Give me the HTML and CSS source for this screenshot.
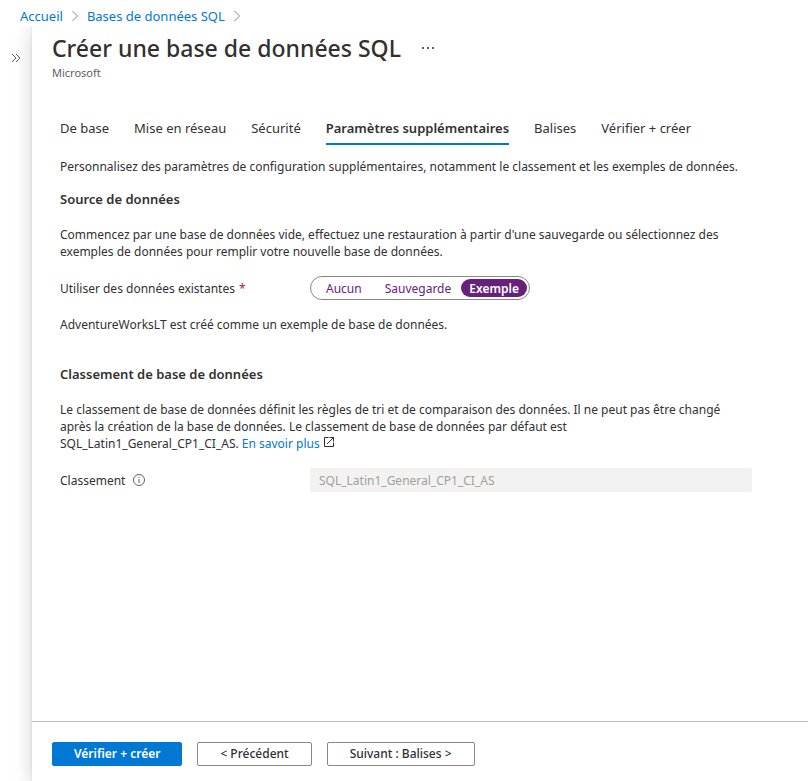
FILE: index.html
```html
<!DOCTYPE html>
<html lang="fr">
<head>
<meta charset="utf-8">
<meta name="viewport" content="width=device-width, initial-scale=1">
<title>Créer une base de données SQL</title>
<link rel="stylesheet" href="styles.css">
</head>
<body>
<nav class="breadcrumb">
  <a href="#">Accueil</a>
  <svg class="chevron" viewBox="0 0 8 12"><path d="M1.5 1 6.5 6l-5 5"/></svg>
  <a href="#">Bases de données SQL</a>
  <svg class="chevron" viewBox="0 0 8 12"><path d="M1.5 1 6.5 6l-5 5"/></svg>
</nav>
<div class="shell">
  <aside class="rail">
    <button class="expand" type="button">
      <svg viewBox="0 0 10 10"><path d="M1 1l4 4-4 4M5 1l4 4-4 4"/></svg>
    </button>
  </aside>
  <main class="blade">
    <header class="head">
      <div class="title-row">
        <h1>Créer une base de données SQL</h1>
        <button class="more" type="button">
          <svg viewBox="0 0 12 2"><path d="M0 0h2v2H0zM5 0h2v2H5zM10 0h2v2h-2z"/></svg>
        </button>
      </div>
      <p class="publisher">Microsoft</p>
    </header>
    <nav class="tabs">
      <a href="#">De base</a>
      <a href="#">Mise en réseau</a>
      <a href="#">Sécurité</a>
      <a href="#" class="active">Paramètres supplémentaires</a>
      <a href="#">Balises</a>
      <a href="#">Vérifier + créer</a>
    </nav>
    <form class="content">
      <p class="intro">Personnalisez des paramètres de configuration supplémentaires, notamment le classement et les exemples de données.</p>
      <section>
        <h2>Source de données</h2>
        <p class="text">Commencez par une base de données vide, effectuez une restauration à partir d'une sauvegarde ou sélectionnez des<br>exemples de données pour remplir votre nouvelle base de données.</p>
        <div class="field">
          <span class="label" id="source-label">Utiliser des données existantes <span class="required">*</span></span>
          <div class="pills" role="radiogroup" aria-labelledby="source-label">
            <label><input type="radio" name="source"><span>Aucun</span></label>
            <label><input type="radio" name="source"><span>Sauvegarde</span></label>
            <label><input type="radio" name="source" checked><span>Exemple</span></label>
          </div>
        </div>
        <p class="text">AdventureWorksLT est créé comme un exemple de base de données.</p>
      </section>
      <section class="collation">
        <h2>Classement de base de données</h2>
        <p class="text">Le classement de base de données définit les règles de tri et de comparaison des données. Il ne peut pas être changé<br>après la création de la base de données. Le classement de base de données par défaut est<br>SQL_Latin1_General_CP1_CI_AS. <a href="#">En savoir plus <svg class="external" viewBox="0 0 12 12"><path d="M5.500 1.500h-4v9h9v-4M6.500 1.500h4v4M10.500 1.500 4 8"/></svg></a></p>
        <div class="field">
          <label class="label" for="collation">Classement
            <svg class="info" viewBox="0 0 12 12"><circle cx="6" cy="6" r="5.500"/><path d="M6 5v4M6 3v1"/></svg>
          </label>
          <input class="textbox" id="collation" type="text" value="SQL_Latin1_General_CP1_CI_AS" disabled>
        </div>
      </section>
    </form>
    <footer class="actions">
      <button class="btn primary" type="button">Vérifier + créer</button>
      <button class="btn previous" type="button">&lt; Précédent</button>
      <button class="btn next" type="button">Suivant : Balises &gt;</button>
    </footer>
  </main>
</div>
</body>
</html>
```
FILE: styles.css
```css
* {
  box-sizing: border-box;
}

body {
  margin: 0;
  min-height: 100vh;
  display: flex;
  flex-direction: column;
  background: #fff;
  color: #323130;
  font-family: "Noto Sans", "Open Sans", sans-serif;
  font-size: 12px;
  line-height: 17px;
}

h1, h2, p {
  margin: 0;
}

a {
  color: #0078d4;
  text-decoration: none;
}

button, input {
  font: inherit;
}

svg {
  fill: none;
  stroke: #605e5c;
}

.breadcrumb {
  display: flex;
  align-items: center;
  gap: 8px;
  height: 26px;
  padding: 6px 20px 0;
  font-size: 13px;
}

.chevron {
  width: 8px;
  height: 12px;
  stroke: #8a8886;
}

.shell {
  flex: 1;
  display: flex;
}

.rail {
  flex: 0 0 32px;
  padding-top: 24px;
}

.expand, .more {
  display: block;
  padding: 0;
  border: 0;
  background: none;
}

.expand {
  margin: 3px auto 0;
}

.expand svg {
  display: block;
  width: 10px;
  height: 10px;
}

.blade {
  flex: 1;
  min-width: 0;
  display: flex;
  flex-direction: column;
  background: #fff;
  box-shadow: 0 4px 18px rgba(0, 0, 0, 0.18), 0 0 2px rgba(0, 0, 0, 0.12);
  clip-path: inset(0 0 0 -20px);
}

.head {
  padding: 6px 20px 0;
}

.title-row {
  display: flex;
  align-items: center;
  gap: 21px;
}

h1 {
  font-size: 23px;
  line-height: 32px;
  font-weight: 500;
}

.more svg {
  display: block;
  width: 12px;
  height: 2px;
  fill: #605e5c;
  stroke: none;
}

.publisher {
  font-size: 11px;
  line-height: 17px;
  color: #605e5c;
}

.tabs {
  display: flex;
  gap: 25px;
  margin-top: 37px;
  padding: 0 28px;
  font-size: 13px;
}

.tabs a {
  height: 27px;
  color: #323130;
  border-bottom: 2px solid transparent;
  line-height: 20px;
}

.tabs .active {
  border-color: #0078d4;
  font-weight: 600;
}

.content {
  flex: 1;
  max-width: 748px;
  padding: 13px 28px 24px;
}

h2 {
  margin: 16px 0 18px;
  font-size: 13px;
  line-height: 17px;
  font-weight: 600;
}

.field {
  display: flex;
  align-items: center;
  height: 24px;
  margin: 16px 0;
}

.label {
  flex: 0 0 250px;
  display: flex;
  align-items: center;
  gap: 8px;
}

#source-label {
  gap: 4px;
}

.required {
  color: #a4262c;
}

.pills {
  display: flex;
  gap: 2px;
  height: 24px;
  padding: 2px;
  border: 1px solid #8a8886;
  border-radius: 12px;
}

.pills label {
  display: flex;
}

.pills input {
  position: absolute;
  opacity: 0;
}

.pills span {
  padding: 0 8px;
  border-radius: 10px;
  line-height: 19px;
  color: #68217a;
}

.pills label:first-child span {
  padding: 0 13px;
}

.pills input:checked + span {
  background: #68217a;
  color: #fff;
  font-weight: 600;
}

.collation {
  margin-top: 33px;
}

.external {
  width: 12px;
  height: 12px;
  stroke: #323130;
}

.info {
  width: 12px;
  height: 12px;
}

.textbox {
  flex: 1;
  min-width: 0;
  height: 24px;
  padding: 0 9px;
  border: 0;
  border-radius: 2px;
  background: #f3f2f1;
  color: #a19f9d;
}

.actions {
  display: flex;
  gap: 15px;
  padding: 20px 20px 15px;
  border-top: 1px solid #bdbbb9;
}

.btn {
  height: 24px;
  padding: 0 22px;
  border: 1px solid #8a8886;
  border-radius: 2px;
  background: #fff;
  color: #323130;
  line-height: 20px;
  font-weight: 500;
}

.primary {
  padding: 0 21px;
  border-color: #0078d4;
  background: #0078d4;
  color: #fff;
  font-weight: 600;
}
```
